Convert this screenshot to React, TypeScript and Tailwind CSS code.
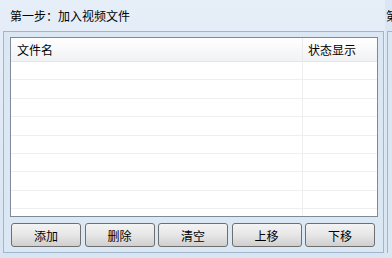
import React from 'react';

const buttons = ['添加', '删除', '清空', '上移', '下移'];
const rows = Array.from({ length: 9 });

export default function App() {
  return (
    <div
      className="w-[392px] h-[258px] overflow-hidden flex bg-[#dae6f3] text-black"
      style={{ fontFamily: '"Noto Sans CJK SC", "Noto Sans", sans-serif' }}
    >
      {/* Step one column */}
      <div className="w-[385px] shrink-0 flex flex-col bg-gradient-to-b from-[#e6eef8] to-[#d9e5f3]">
        <div className="h-[31px] pl-[10px] flex items-center text-[12px] leading-none">
          第一步：加入视频文件
        </div>
        <div className="ml-[3px] mr-[1px] h-[222px] border border-[#9fb6cf] bg-[#dce7f4] pl-[6px] pr-[5px] pt-[5px] flex flex-col">
          {/* List */}
          <div className="h-[180px] border border-[#7f8a99] bg-white overflow-hidden flex flex-col">
            <div className="h-[24px] shrink-0 flex text-[12px] leading-none bg-gradient-to-b from-white to-[#f1f2f4] border-b border-[#e3e5e8]">
              <div className="w-[292px] pl-[6px] flex items-center border-r border-[#ebebeb]">文件名</div>
              <div className="flex-1 pl-[5px] flex items-center">状态显示</div>
            </div>
            {rows.map((_, i) => (
              <div key={i} className="h-[18.4px] shrink-0 flex border-b border-[#efefef]">
                <div className="w-[292px] border-r border-[#efefef]" />
                <div className="flex-1" />
              </div>
            ))}
          </div>
          {/* Buttons */}
          <div className="mt-[6px] flex gap-[3.5px] pl-[1px]">
            {buttons.map((b) => (
              <button
                key={b}
                className="w-[70px] h-[24px] rounded-[3px] border border-[#6f6f6f] bg-gradient-to-b from-[#f4f4f4] via-[#e6e6e6] to-[#cfcfcf] text-[12px] leading-none pt-[1px] flex items-center justify-center"
              >
                {b}
              </button>
            ))}
          </div>
        </div>
      </div>
      {/* Next column sliver */}
      <div className="flex-1 flex flex-col">
        <div className="h-[31px] pl-[1px] flex items-center text-[12px] leading-none">第</div>
        <div className="ml-[2px] h-[222px] border-l border-t border-[#9fb6cf] bg-[#dce7f4]" />
      </div>
    </div>
  );
}
